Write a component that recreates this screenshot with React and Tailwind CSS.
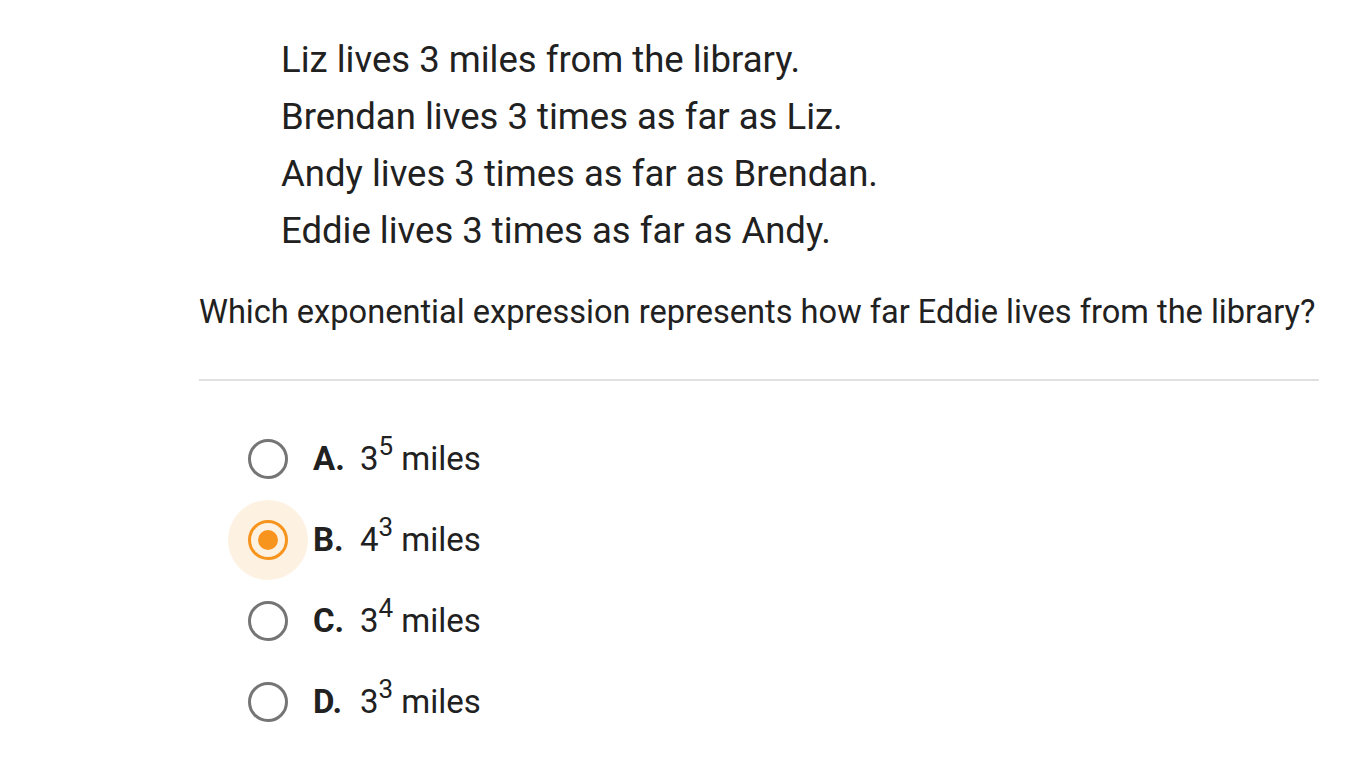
import { useState } from 'react';

const lines = [
  'Liz lives 3 miles from the library.',
  'Brendan lives 3 times as far as Liz.',
  'Andy lives 3 times as far as Brendan.',
  'Eddie lives 3 times as far as Andy.',
];

const options = [
  { letter: 'A', base: '3', exp: '5' },
  { letter: 'B', base: '4', exp: '3' },
  { letter: 'C', base: '3', exp: '4' },
  { letter: 'D', base: '3', exp: '3' },
];

function Radio({ checked }) {
  return (
    <div className={`w-[80px] h-[80px] rounded-full flex items-center justify-center ${checked ? 'bg-[#fdf1e1]' : ''}`}>
      <div
        className={`w-[40px] h-[40px] rounded-full border-[3px] flex items-center justify-center ${
          checked ? 'border-[#f7941d]' : 'border-[#757575]'
        }`}
      >
        {checked && <div className="w-[20px] h-[20px] rounded-full bg-[#f7941d]" />}
      </div>
    </div>
  );
}

export default function App() {
  const [selected, setSelected] = useState('B');

  return (
    <div className="w-[1366px] h-[768px] bg-white text-[#212121] font-['Roboto',sans-serif] overflow-hidden">
      <div className="pl-[199px] pt-[31px]">
        {/* passage */}
        <div className="pl-[82px] flex flex-col">
          {lines.map(line => (
            <p key={line} className="text-[36.5px] leading-[57px] whitespace-nowrap">{line}</p>
          ))}
        </div>

        {/* question */}
        <p className="text-[32.6px] leading-[57px] mt-[25px] whitespace-nowrap">
          Which exponential expression represents how far Eddie lives from the library?
        </p>

        <div className="mt-[38px] h-[2px] bg-[#e0e0e0] w-[1120px]" />

        {/* answer choices */}
        <div className="mt-[38px] pl-[29px] flex flex-col gap-[1px]">
          {options.map(opt => (
            <button
              key={opt.letter}
              onClick={() => setSelected(opt.letter)}
              className="flex items-center text-left"
            >
              <Radio checked={selected === opt.letter} />
              <span className="ml-[5px] text-[33px] font-bold w-[47px]">{opt.letter}.</span>
              <span className="text-[33px] whitespace-nowrap">
                {opt.base}
                <span className="relative top-[-15px] text-[26px] leading-none">{opt.exp}</span> miles
              </span>
            </button>
          ))}
        </div>
      </div>
    </div>
  );
}
